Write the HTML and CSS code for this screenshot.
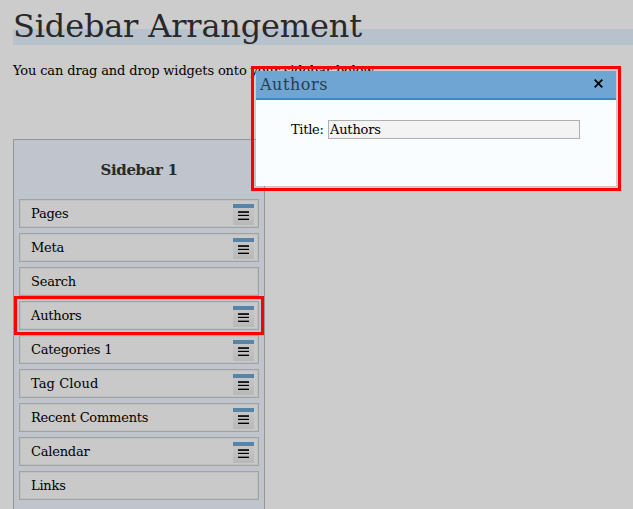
FILE: index.html
```html
<!DOCTYPE html>
<html lang="en">
<head>
<meta charset="utf-8">
<title>Sidebar Arrangement</title>
<link rel="stylesheet" href="styles.css">
</head>
<body>
<main class="page">
  <h1 class="heading">Sidebar Arrangement</h1>
  <p class="intro">You can drag and drop widgets onto your sidebar below.</p>
  <section class="sidebar">
    <h2 class="sidebar-title">Sidebar 1</h2>
    <ul class="widgets">
      <li class="widget"><span>Pages</span><i class="config"></i></li>
      <li class="widget"><span>Meta</span><i class="config"></i></li>
      <li class="widget"><span>Search</span></li>
      <li class="widget"><span>Authors</span><i class="config"></i><b class="highlight"></b></li>
      <li class="widget"><span>Categories 1</span><i class="config"></i></li>
      <li class="widget wide"><span>Tag Cloud</span><i class="config"></i></li>
      <li class="widget"><span>Recent Comments</span><i class="config"></i></li>
      <li class="widget"><span>Calendar</span><i class="config"></i></li>
      <li class="widget"><span>Links</span></li>
    </ul>
  </section>
</main>
<div class="dialog-frame">
  <div class="dialog">
    <header class="dialog-head">
      <h3>Authors</h3>
      <svg class="close" width="9" height="9" viewBox="0 0 9 9"><path d="M0.7 0.7L8.3 8.3M8.3 0.7L0.7 8.3"/></svg>
    </header>
    <div class="field">
      <label for="title">Title:</label>
      <input id="title" type="text" value="Authors">
    </div>
  </div>
</div>
</body>
</html>
```
FILE: styles.css
```css
* { box-sizing: border-box; }
body {
  margin: 0;
  height: 509px;
  overflow: hidden;
  background: #ccc;
  color: #000;
  font: 13px/16px "DejaVu Serif", serif;
}
h1, h2, h3, p, ul { margin: 0; padding: 0; font-weight: normal; }
.page { height: 509px; padding: 0 0 0 13px; overflow: hidden; }
.heading {
  height: 45px;
  padding-top: 6px;
  background: linear-gradient(#b8c2cc, #b8c2cc) 0 29px / 100% 16px no-repeat;
  color: #292929;
  font-size: 32px;
  letter-spacing: -0.17px;
  line-height: 40px;
  white-space: nowrap;
}
.intro { margin-top: 18px; height: 16px; white-space: nowrap; letter-spacing: -0.14px; }
.sidebar {
  width: 252px;
  height: 370px;
  margin-top: 60px;
  padding: 0 5px;
  border: 1px solid #949698;
  border-bottom: 0;
  background: #bfc4cd;
}
.sidebar-title {
  height: 59px;
  padding-top: 21px;
  color: #292929;
  font-size: 15px;
  font-weight: bold;
  letter-spacing: -0.35px;
  line-height: 18px;
  text-align: center;
}
.widgets { display: grid; gap: 5px; list-style: none; }
.widget {
  position: relative;
  display: flex;
  justify-content: space-between;
  height: 29px;
  padding: 4px 4px 0 11px;
  border: 1px solid #a2a2a2;
  background: #c9c9c9;
  box-shadow: inset 0 0 0 1px #bfc0c0;
  letter-spacing: -0.22px;
  line-height: 20px;
}
.wide { letter-spacing: 0.1px; }
.config {
  width: 21px;
  height: 21px;
  background:
    linear-gradient(#5685a9, #5685a9) 0 0 / 21px 4px no-repeat,
    linear-gradient(#333, #111) 5px 7px / 11px 2px no-repeat,
    linear-gradient(#000, #000) 5px 11px / 11px 1px no-repeat,
    linear-gradient(#000, #000) 5px 15px / 11px 1px no-repeat,
    linear-gradient(#777, #777) 5px 14px / 11px 1px no-repeat,
    linear-gradient(#999, #999) 5px 10px / 11px 1px no-repeat,
    linear-gradient(#c9c9c9, #b8b8b8);
}
.highlight {
  position: absolute;
  z-index: 1;
  left: -6px;
  top: -6px;
  width: 250px;
  height: 39px;
  border: 3px solid #f00;
}
.dialog-frame {
  position: absolute;
  z-index: 2;
  left: 251px;
  top: 66px;
  width: 370px;
  height: 125px;
  padding: 2px;
  border: 3px solid #f00;
}
.dialog { height: 115px; background: #f9fdff; }
.dialog-head {
  display: flex;
  justify-content: space-between;
  height: 29px;
  padding: 0 13px 0 4px;
  border-bottom: 2px solid #4388b8;
  background: #6ea5d2;
}
.dialog-head h3 { color: #293d4d; font-size: 16px; letter-spacing: 0.55px; line-height: 27px; }
.close { margin-top: 8px; stroke: #000; stroke-width: 1.8; }
.field { display: flex; padding: 20px 0 0 35px; line-height: 19px; }
.field label { width: 37px; letter-spacing: -0.3px; }
.field input {
  width: 252px;
  height: 19px;
  padding: 0 1px;
  border: 1px solid #afafaf;
  background: #f3f3f3;
  color: #000;
  font: 13px "DejaVu Serif", serif;
  letter-spacing: -0.2px;
}
```
